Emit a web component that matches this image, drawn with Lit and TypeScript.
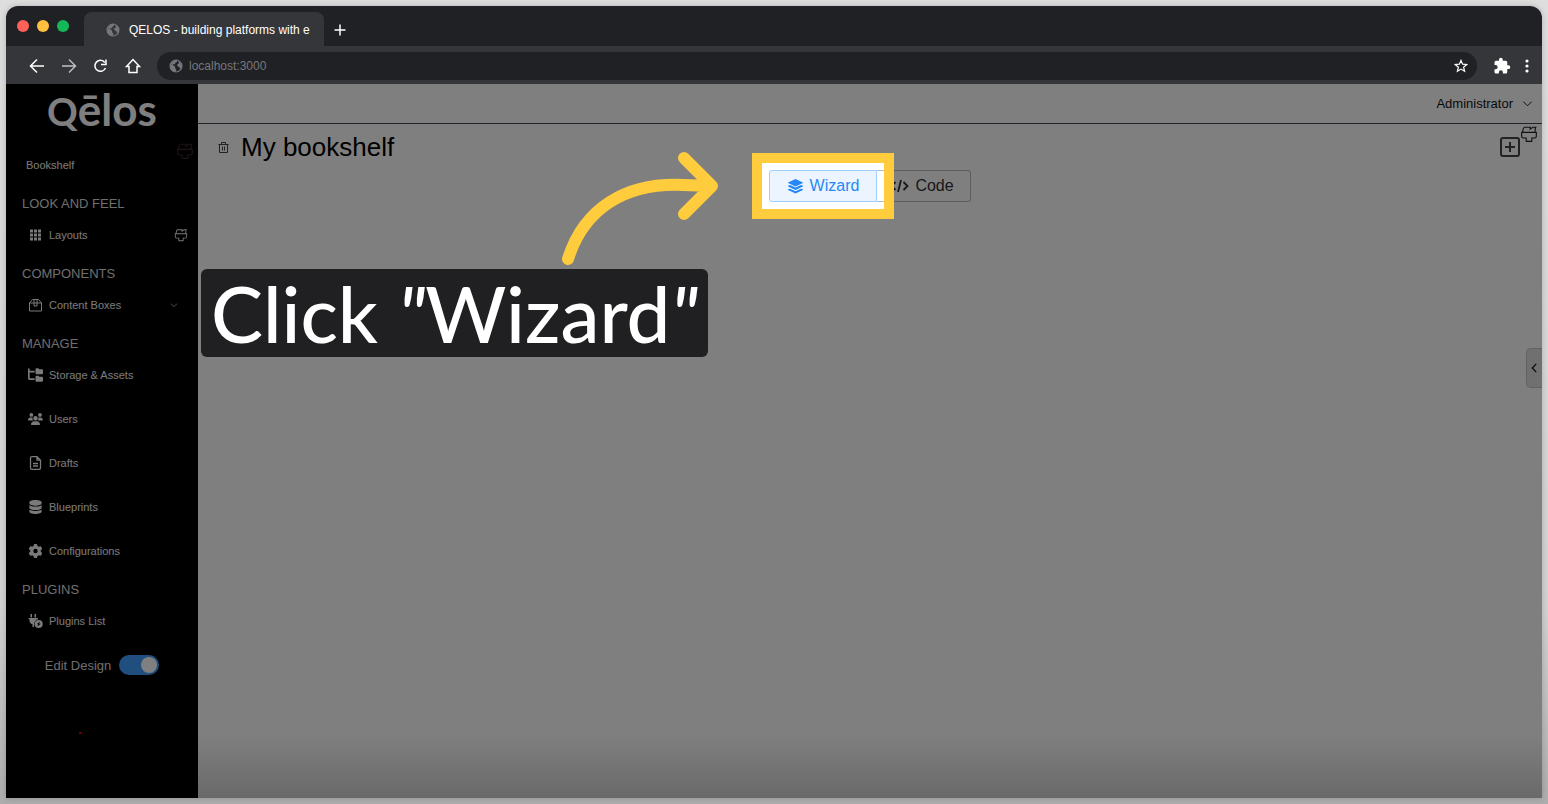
import { LitElement, html, css, svg, nothing } from "lit";
import { customElement, state } from "lit/decorators.js";

const brush = svg`<svg class="icon" viewBox="0 0 1024 1024" fill="currentColor" aria-hidden="true"><path d="M896 448H128v192a64 64 0 0 0 64 64h192v192h256V704h192a64 64 0 0 0 64-64zm-770.752-64c0-47.552 5.248-90.24 15.552-128 14.72-54.016 42.496-107.392 83.2-160h417.28l-15.36 70.336L736 96h211.2c-24.832 42.88-41.92 96.256-51.2 160a663.872 663.872 0 0 0-6.144 128H960v256a128 128 0 0 1-128 128H704v160a32 32 0 0 1-32 32H352a32 32 0 0 1-32-32V768H192A128 128 0 0 1 64 640V384h61.248zm64 0h636.544c-2.048-45.824.256-91.584 6.848-137.216 4.48-30.848 10.688-59.776 18.688-86.784h-96.64l-221.12 141.248L561.92 160H256.512c-25.856 37.888-43.776 75.456-53.952 112.832-8.768 32.064-13.248 69.12-13.312 111.168z"/></svg>`;

const globe = svg`<svg class="icon" viewBox="0 0 16 16" aria-hidden="true"><circle cx="8" cy="8" r="6.8" fill="none" stroke="currentColor" stroke-width="1.3"/><path fill="currentColor" d="M1.500 6l3 1 2.500 1.600v2l1.400 1.300-.6 3L4 14 1.500 10zM6 1.500l3-.6.2 2.500-2 1-.2 1.500-2.500.2 0 1.200-2.500-1.800zM11 2.300l3 3L15 8l-1 3-1.700-.2-.4-1.700-2.200-.7L9.100 6.500l2-1z"/></svg>`;

const chevron = svg`<svg class="icon" viewBox="0 0 12 12" fill="none" stroke="currentColor" aria-hidden="true"><path d="M1.500 4 6 8.500 10.500 4"/></svg>`;

const glyphs: Record<string, unknown> = {
  grid: svg`<svg class="icon" viewBox="0 0 14 14" fill="currentColor"><path d="M1.500 1.500h3v3h-3zM5.500 1.500h3v3h-3zM9.500 1.500h3v3h-3zM1.500 5.500h3v3h-3zM5.500 5.500h3v3h-3zM9.500 5.500h3v3h-3zM1.500 9.500h3v3h-3zM5.500 9.500h3v3h-3zM9.500 9.500h3v3h-3z"/></svg>`,
  box: svg`<svg class="icon" viewBox="0 0 14 14" fill="none" stroke="currentColor"><path d="M1 5 4 1.500h6L13 5v8H1zM1 5h12M5.500 1.500V8h3V1.500"/></svg>`,
  tree: svg`<svg class="icon" viewBox="0 0 576 512" fill="currentColor"><path d="M64 32C64 14 50 0 32 0S0 14 0 32v352c0 35 29 64 64 64h192v-64H64V160h192V96H64zM288 192c0 18 14 32 32 32h224c18 0 32-14 32-32V64c0-18-14-32-32-32h-98c-9 0-17-3-23-9l-13-14c-6-6-14-9-22-9h-68c-18 0-32 14-32 32zm0 288c0 18 14 32 32 32h224c18 0 32-14 32-32V352c0-18-14-32-32-32h-98c-9 0-17-3-23-9l-13-14c-6-6-14-9-22-9h-68c-18 0-32 14-32 32z"/></svg>`,
  users: svg`<svg class="icon" viewBox="0 0 640 512" fill="currentColor"><path d="M144 0a80 80 0 1 1 0 160 80 80 0 1 1 0-160zm368 0a80 80 0 1 1 0 160 80 80 0 1 1 0-160zM0 299c0-59 48-107 107-107h43c16 0 31 4 45 10-10 40 0 86 34 118H21c-12 0-21-10-21-21zm405 21c34-32 46-76 36-118 14-7 29-10 44-10h43c59 0 107 48 107 107 0 11-9 21-21 21zM224 224a96 96 0 1 1 192 0 96 96 0 1 1-192 0zM128 485c0-73 60-133 133-133h118c73 0 133 60 133 133 0 15-12 27-27 27H155c-15 0-27-12-27-27z"/></svg>`,
  file: svg`<svg class="icon" viewBox="0 0 14 14" fill="none" stroke="currentColor" stroke-width="1.300"><path d="M3.500.700h5L12 4.200V12a1.300 1.300 0 0 1-1.300 1.300H3.300A1.300 1.300 0 0 1 2 12V2A1.300 1.300 0 0 1 3.500.700zM8.500.700v3.500H12M4.500 7.500h5M4.500 10h5"/></svg>`,
  data: svg`<svg class="icon" viewBox="0 0 448 512" fill="currentColor"><path d="M448 80v48c0 44-100 80-224 80S0 172 0 128V80C0 36 100 0 224 0s224 36 224 80zm-55 135c21-8 40-17 55-29v102c0 44-100 80-224 80S0 332 0 288V186c15 12 34 21 55 29 45 16 105 25 169 25s124-9 169-25zM0 346c15 12 34 21 55 29 45 16 105 25 169 25s124-9 169-25c21-8 40-17 55-29v86c0 44-100 80-224 80S0 476 0 432z"/></svg>`,
  gear: svg`<svg class="icon" viewBox="0 0 512 512" fill="currentColor"><path fill-rule="evenodd" d="M496 167c3 8 1 18-6 24l-43 39a205 205 0 0 1 0 52l43 39c7 6 9 16 6 24-5 12-10 24-16 35l-5 8c-7 11-14 22-23 32-6 7-15 9-24 6l-55-17c-14 10-29 19-45 26l-12 56c-2 9-9 16-18 17a263 263 0 0 1-84 0c-9-1-16-8-18-17l-12-56c-16-7-31-16-45-26l-55 17c-9 3-18 1-24-6-9-10-16-21-23-32l-5-8c-6-11-11-23-16-35-3-8-1-18 6-24l43-39a205 205 0 0 1 0-52l-43-39c-7-6-9-16-6-24 5-12 10-24 16-35l5-8c7-11 14-22 23-32 6-7 15-9 24-6l55 17c14-10 29-19 45-26l12-56c2-9 9-16 18-17a263 263 0 0 1 84 0c9 1 16 8 18 17l12 56c16 7 31 16 45 26l55-17c9-3 18-1 24 6 9 10 16 21 23 32l5 8c6 11 11 23 16 35zM256 336a80 80 0 1 0 0-160 80 80 0 1 0 0 160z"/></svg>`,
  plug: svg`<svg class="icon" viewBox="0 0 15 14" fill="currentColor"><path d="M2.500 0H4v3.500H2.500zM6.500 0H8v3.500H6.500zM.5 4H10v1.300A4.500 4.500 0 0 0 6.300 10.500L6 13H4.500v-2.700A4.200 4.200 0 0 1 1.500 6V5.300h-1z"/><path fill-rule="evenodd" d="M10.700 6a4 4 0 1 1 0 8 4 4 0 0 1 0-8zm1.200 1.500L8.800 10.300h1.600L9.500 12.600l3.200-2.900h-1.600z"/></svg>`,
};

interface Item { label: string; icon: string; brush?: boolean; more?: boolean }
interface Section { title: string; items: Item[] }

const sections: Section[] = [
  { title: "LOOK AND FEEL", items: [{ label: "Layouts", icon: "grid", brush: true }] },
  { title: "COMPONENTS", items: [{ label: "Content Boxes", icon: "box", more: true }] },
  {
    title: "MANAGE",
    items: [
      { label: "Storage & Assets", icon: "tree" },
      { label: "Users", icon: "users" },
      { label: "Drafts", icon: "file" },
      { label: "Blueprints", icon: "data" },
      { label: "Configurations", icon: "gear" },
    ],
  },
  { title: "PLUGINS", items: [{ label: "Plugins List", icon: "plug" }] },
];

@customElement("browser-chrome")
export class BrowserChrome extends LitElement {
  static styles = css`
    :host { display: block; color: #fff; }
    * { box-sizing: border-box; }
    button { background: none; border: 0; padding: 0; color: inherit; font: inherit; display: grid; place-items: center; }
    .icon { display: block; width: 100%; height: 100%; }
    .tabs { display: flex; align-items: flex-end; height: 40px; background: #202124; padding-left: 11px; }
    .lights { display: flex; gap: 8px; align-self: center; width: 67px; }
    .light { width: 12px; height: 12px; border-radius: 50%; background: #ff6159; }
    .amber { background: #ffbf3f; }
    .green { background: #14b859; }
    .tab { display: flex; align-items: center; gap: 9px; width: 240px; height: 34px; padding: 2px 15px 0 22px; background: #35363a; border-radius: 8px 8px 0 0; font-size: 12px; white-space: nowrap; }
    .globe { width: 14px; height: 14px; color: #76777b; flex: none; }
    .plus { width: 12px; height: 12px; margin: 0 0 10px 10px; }
    .bar { display: flex; align-items: center; height: 38px; padding: 2px 7px 0 22px; background: #35363a; }
    .nav { display: flex; gap: 14px; margin-right: 15px; }
    .nav button { width: 18px; height: 18px; }
    .nav .next { color: #c0c1c3; }
    .address { flex: 1; display: flex; align-items: center; gap: 6px; height: 28px; padding: 0 9px 0 12px; border-radius: 14px; background: #202124; }
    .address input { flex: 1; min-width: 0; border: 0; outline: 0; padding: 0; background: none; color: #77787b; font: inherit; font-size: 12px; }
    .star { width: 14px; height: 14px; }
    .tools { display: flex; align-items: center; gap: 8px; margin-left: 16px; }
    .puzzle { width: 18px; height: 18px; }
    .dots { width: 16px; height: 16px; }
  `;

  render() {
    return html`
      <div class="tabs">
        <div class="lights"><span class="light"></span><span class="light amber"></span><span class="light green"></span></div>
        <div class="tab"><span class="globe">${globe}</span>QELOS - building platforms with e</div>
        <button class="plus" aria-label="New tab"><svg class="icon" viewBox="0 0 12 12" stroke="currentColor" stroke-width="1.500"><path d="M6 .5v11M.5 6h11"/></svg></button>
      </div>
      <div class="bar">
        <div class="nav">
          <button aria-label="Back"><svg class="icon" viewBox="0 0 18 18" fill="none" stroke="currentColor" stroke-width="1.500"><path d="M16 9H3M9 2.500 2.500 9 9 15.500"/></svg></button>
          <button class="next" aria-label="Forward"><svg class="icon" viewBox="0 0 18 18" fill="none" stroke="currentColor" stroke-width="1.400"><path d="M2 9h13M9 2.500 15.500 9 9 15.500"/></svg></button>
          <button aria-label="Reload"><svg class="icon" viewBox="0 0 18 18" fill="none" stroke="currentColor" stroke-width="1.500"><path d="M12.800 5.500A5.500 5.500 0 1 0 13.500 11M14 2.500v5H9"/></svg></button>
          <button aria-label="Home"><svg class="icon" viewBox="0 0 18 18" fill="none" stroke="currentColor" stroke-width="1.500"><path d="M5 15.500V9.500H2.500L9 2.500l6.500 7H13v6z"/></svg></button>
        </div>
        <div class="address">
          <span class="globe">${globe}</span>
          <input type="text" aria-label="Address" value="localhost:3000" />
          <button class="star" aria-label="Bookmark"><svg class="icon" viewBox="0 0 14 14" fill="none" stroke="currentColor" stroke-width="1.200"><path d="M7 1.400 8.600 5.200l4.100.3-3.100 2.700 1 4L7 10.100l-3.600 2.100 1-4L1.300 5.500l4.100-.3z"/></svg></button>
        </div>
        <div class="tools">
          <button class="puzzle" aria-label="Extensions"><svg class="icon" viewBox="0 0 24 24" fill="currentColor"><path d="M20.500 11H19V7a2 2 0 0 0-2-2h-4V3.500a2.500 2.500 0 0 0-5 0V5H4a2 2 0 0 0-2 2v3.800h1.500a2.700 2.700 0 0 1 0 5.400H2V20a2 2 0 0 0 2 2h3.800v-1.500a2.700 2.700 0 0 1 5.400 0V22H17a2 2 0 0 0 2-2v-4h1.500a2.500 2.500 0 0 0 0-5z"/></svg></button>
          <button class="dots" aria-label="Menu"><svg class="icon" viewBox="0 0 16 16" fill="currentColor"><circle cx="8" cy="3" r="1.600"/><circle cx="8" cy="8" r="1.600"/><circle cx="8" cy="13" r="1.600"/></svg></button>
        </div>
      </div>`;
  }
}

@customElement("side-nav")
export class SideNav extends LitElement {
  static styles = css`
    :host { display: block; background: #000; color: #fff; }
    * { box-sizing: border-box; }
    .icon { display: block; width: 100%; height: 100%; }
    .logo { display: flex; justify-content: center; align-items: baseline; height: 58px; font: 700 44px/50px Lato, sans-serif; color: #fff; }
    .small { font-size: 38px; }
    .link { display: flex; align-items: center; gap: 6px; height: 44px; padding: 0 10px 0 22px; color: #f4f4f4; font-size: 11px; text-decoration: none; }
    .home { height: 45px; padding: 0 4px 0 20px; }
    .glyph { width: 15px; height: 14px; }
    .grow { flex: 1; }
    .brush { width: 14px; height: 14px; }
    .dim { width: 18px; height: 18px; margin-bottom: 28px; color: #3e2628; }
    .more { width: 8px; height: 8px; margin-right: 10px; }
    .title { margin: 0; height: 26px; padding: 9px 16px 0; font-size: 13px; line-height: 16px; font-weight: 400; color: #ddd; }
    .design { display: flex; justify-content: center; align-items: center; gap: 8px; height: 44px; font-size: 13px; color: #ddd; }
    .switch { appearance: none; display: flex; justify-content: flex-end; width: 40px; height: 20px; margin: 0; padding: 2px; border-radius: 10px; background: #409eff; }
    .switch::before { content: ""; width: 16px; height: 16px; border-radius: 50%; background: #fff; }
    .switch:not(:checked) { justify-content: flex-start; background: #888; }
    .alert { display: block; width: 3px; height: 2px; margin: 45px 0 0 73px; background: #c00; }
  `;

  render() {
    return html`
      <div class="logo"><span class="small">Q</span>ēlos</div>
      <nav>
        <a class="link home" href="#">Bookshelf<span class="grow"></span><span class="dim">${brush}</span></a>
        ${sections.map(
          (s) => html`
            <h2 class="title">${s.title}</h2>
            ${s.items.map(
              (i) => html`<a class="link" href="#"><span class="glyph">${glyphs[i.icon]}</span>${i.label}<span class="grow"></span>
                ${i.brush ? html`<span class="brush">${brush}</span>` : nothing}
                ${i.more ? html`<span class="more">${chevron}</span>` : nothing}</a>`
            )}`
        )}
      </nav>
      <label class="design">Edit Design <input class="switch" type="checkbox" role="switch" checked /></label>
      <span class="alert"></span>`;
  }
}

@customElement("app-root")
export class AppRoot extends LitElement {
  @state() mode: "wizard" | "code" = "wizard";

  static styles = css`
    :host { display: flex; min-height: 100vh; box-sizing: border-box; padding: 6px; background: linear-gradient(#dedede, #d3d3d4 75%, #adadad); font-family: "Liberation Sans", Arial, sans-serif; }
    * { box-sizing: border-box; }
    button { background: none; border: 0; padding: 0; color: inherit; font: inherit; }
    .icon { display: block; width: 100%; height: 100%; }
    .window { flex: 1; display: flex; flex-direction: column; border-radius: 12px 12px 0 0; overflow: hidden; box-shadow: 0 0 6px #0003; }
    .page { flex: 1; display: grid; grid-template-columns: 192px 1fr; position: relative; overflow: hidden; background: #fff; }
    .main { display: flex; flex-direction: column; background: linear-gradient(#fff calc(100% - 64px), #d4d4d4); }
    .top { display: flex; justify-content: flex-end; height: 40px; padding-right: 9px; border-bottom: 1px solid #445; }
    .account { display: flex; align-items: center; gap: 9px; font-size: 13px; color: #111; }
    .arrow { width: 11px; height: 11px; }
    .head { display: flex; align-items: center; height: 46px; padding: 0 4px 0 20px; }
    .trash { width: 11px; height: 11px; margin-right: 12px; color: #444; }
    .title { flex: 1; margin: 0; font-size: 26px; line-height: 30px; font-weight: 400; color: #000; }
    .add { width: 20px; height: 20px; color: #444; }
    .paint { width: 18px; height: 18px; margin-bottom: 26px; color: #222; }
    .modes { display: flex; justify-content: center; }
    .slot { position: relative; }
    .mode { display: flex; align-items: center; justify-content: center; gap: 6px; height: 32px; min-width: 94px; font-size: 16px; color: #303133; border: 1px solid #b8bac0; border-left: 0; border-radius: 0 3px 3px 0; }
    .mode:first-child { min-width: 108px; border-left: 1px solid #a0cfff; border-radius: 3px 0 0 3px; }
    .code { padding: 0 16px 0 13px; }
    .active { color: #2688f5; background: #ecf5ff; border-color: #a0cfff; }
    .mark { width: 17px; height: 17px; }
    .wide { width: 19px; height: 16px; }
    .spot { position: absolute; z-index: 2; inset: -17px; border: 10px solid #ffcc3d; box-shadow: 0 0 0 3000px #00000080; pointer-events: none; }
    .pointer { position: absolute; z-index: 3; right: 157px; top: -20px; width: 160px; height: 118px; pointer-events: none; }
    .caption { position: absolute; z-index: 3; right: 169px; top: 99px; padding: 0 10px; border-radius: 6px; background: #202022; color: #fff; font: 500 78px/88px Lato, sans-serif; white-space: nowrap; }
    .quote { font-style: italic; }
    .handle { position: absolute; right: 0; top: 264px; width: 16px; height: 40px; padding: 3px; border: 1px solid #c4c4c4; border-right: 0; border-radius: 5px 0 0 5px; background: #e0e0e0; color: #000; }
  `;

  render() {
    return html`
      <div class="window">
        <browser-chrome></browser-chrome>
        <div class="page">
          <side-nav></side-nav>
          <main class="main">
            <header class="top"><button class="account">Administrator <span class="arrow">${chevron}</span></button></header>
            <div class="head">
              <button class="trash" aria-label="Remove"><svg class="icon" viewBox="0 0 11 11" fill="none" stroke="currentColor"><path d="M.5 2.500h10M3.500 2.500v-2h4v2M1.500 2.500v8h8v-8M4.500 4.500v4M6.500 4.500v4"/></svg></button>
              <h1 class="title">My bookshelf</h1>
              <button class="add" aria-label="Add"><svg class="icon" viewBox="0 0 20 20" fill="none" stroke="currentColor" stroke-width="2"><rect x="1" y="1" width="18" height="18" rx="2"/><path d="M10 5v10M5 10h10"/></svg></button>
              <button class="paint" aria-label="Edit design">${brush}</button>
            </div>
            <div class="modes">
              <div class="slot">
                <button class="mode ${this.mode === "wizard" ? "active" : ""}" @click=${() => (this.mode = "wizard")}>
                  <svg class="mark" viewBox="0 0 16 16" fill="currentColor"><path d="M8 1l7 3.200v.6L8 8 1 4.800v-.6zM1 7.300l1.800-.7L8 9l5.200-2.400 1.800.7v.7l-7 3.200L1 8zM1 10.700l1.800-.7L8 12.400l5.200-2.400 1.800.7v.7L8 14.600l-7-3.200z"/></svg>Wizard
                </button>
                <span class="spot"></span>
                <svg class="pointer" viewBox="0 0 160 118" fill="none" stroke="#ffcc3d" stroke-width="12" stroke-linecap="round" stroke-linejoin="round"><path d="M8 109C24 58 66 32 124 35L150 36M124 8l28 28-28 28"/></svg>
                <div class="caption">Click <span class="quote">"</span>Wizard<span class="quote">"</span></div>
              </div>
              <button class="mode code ${this.mode === "code" ? "active" : ""}" @click=${() => (this.mode = "code")}>
                <svg class="wide" viewBox="0 0 19 16" fill="none" stroke="currentColor" stroke-width="1.800"><path d="M5.500 4 1.500 8l4 4M13.500 4l4 4-4 4M11 2 8 14"/></svg>Code
              </button>
            </div>
          </main>
          <button class="handle" aria-label="Open panel"><svg class="icon" viewBox="0 0 10 32" fill="none" stroke="currentColor" stroke-width="1.200"><path d="M7 11.500 2.500 16 7 20.500"/></svg></button>
        </div>
      </div>`;
  }
}
